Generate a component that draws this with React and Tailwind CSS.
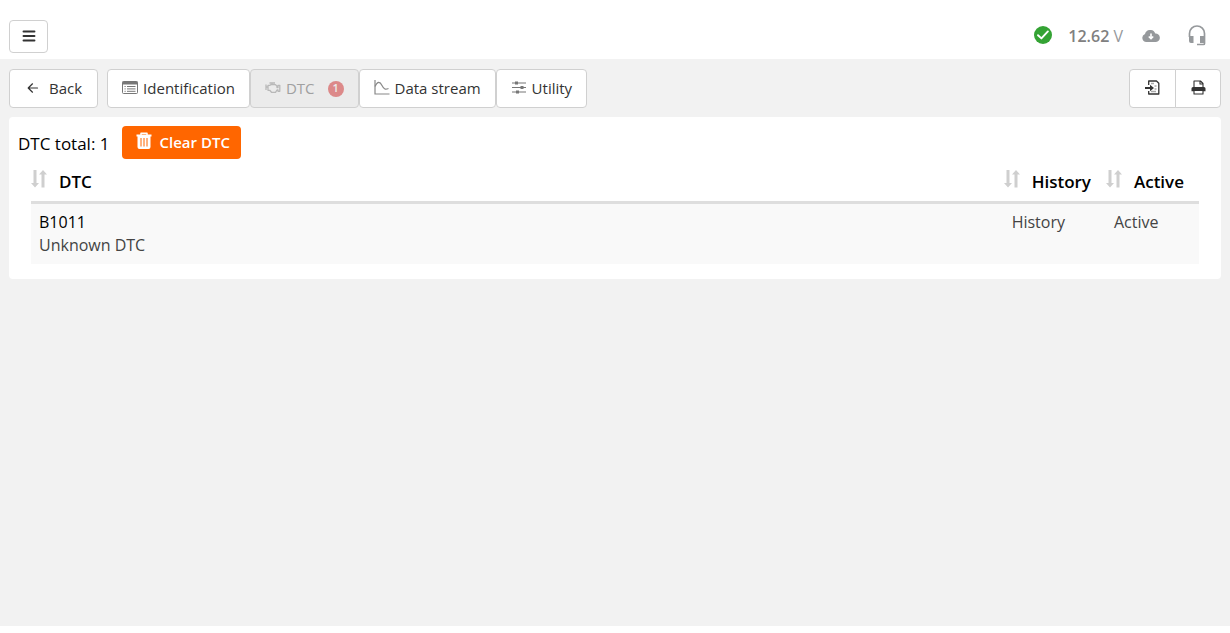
import clsx from 'clsx';

const faults = [{ code: 'B1011', description: 'Unknown DTC', history: 'History', active: 'Active' }];

function MenuIcon() {
  return (
    <svg viewBox="0 0 14 12" className="h-3 w-3.5" stroke="currentColor" strokeLinecap="round" strokeWidth="1.900">
      <path d="M1.500 1.500h11M1.500 6h11M1.500 10.500h11" />
    </svg>
  );
}

function BackIcon() {
  return (
    <svg viewBox="0 0 12 12" className="mb-0.5 h-3 w-3" fill="none" stroke="currentColor" strokeWidth="1.200" strokeLinecap="round" strokeLinejoin="round">
      <path d="M10.500 6H1.500M5.500 1.800L1.200 6l4.300 4.200" />
    </svg>
  );
}

function ListIcon() {
  return (
    <svg viewBox="0 0 16 13" className="mb-0.5 h-[13px] w-4 text-[#777]" fill="none" stroke="currentColor">
      <rect x="0.500" y="0.500" width="15" height="12" rx="1" />
      <path d="M0.500 2h15" strokeWidth="3" />
      <path d="M2.500 5.500h1.200M5 5.500h8.500M2.500 7.900h1.200M5 7.900h8.500M2.500 10.300h1.200M5 10.300h8.500" />
    </svg>
  );
}

function EngineIcon() {
  return (
    <svg viewBox="0 0 16 12" className="mb-0.5 h-3 w-4 text-[#b8b8b8]" fill="none" stroke="currentColor" strokeWidth="1.300" strokeLinejoin="round">
      <path d="M4.500 1h5.500M7 1v1.600M1 2.500v5.500M1 5h2M3 3.300h2l1-.7h4.500l1.500 1.700v1.200h1V3.300h1.800v6H13V8H12l-1.500 2.300h-4L4.700 8.300H3z" />
    </svg>
  );
}

function ChartIcon() {
  return (
    <svg viewBox="0 0 16 15" className="mb-0.5 h-[15px] w-4 text-[#888]" fill="none" stroke="currentColor" strokeWidth="1.200">
      <path d="M1 0v14h14.500" />
      <path d="M1 6.500C3.500 1 6 1.500 8 5.500s3.500 4.200 6.500 3" />
    </svg>
  );
}

function SlidersIcon() {
  return (
    <svg viewBox="0 0 16 13" className="mb-0.5 h-[13px] w-4 text-[#777]" fill="none" stroke="currentColor" strokeWidth="1.200">
      <path d="M1 2h14M1 6.500h14M1 11h14" />
      <path d="M5.500 .5v3M11 5v3M6.500 9.500v3" strokeWidth="3" />
    </svg>
  );
}

function ImportIcon() {
  return (
    <svg viewBox="0 0 15 15" className="mb-0.5 h-[15px] w-[15px] text-[#333]" fill="none" stroke="currentColor" strokeWidth="1.300">
      <path d="M3.700 5V1h7.800L13.800 3.300V14H3.700v-3" strokeLinejoin="round" />
      <path d="M6 3.500h3M9.500 6h2M9.500 9h2M6 11.500h5" stroke="#aaa" />
      <path d="M0 8h6" strokeWidth="2" />
      <path d="M5 4.800L9 8l-4 3.200z" fill="currentColor" stroke="none" />
    </svg>
  );
}

function PrinterIcon() {
  return (
    <svg viewBox="0 0 15 15" className="mb-0.5 h-[15px] w-[15px] text-[#333]" fill="none" stroke="currentColor" strokeWidth="1.100" strokeLinejoin="round">
      <path d="M3 7.500V1h6.500L12 3.500v4M9 1v3h3" />
      <path d="M2 7h11a1.500 1.500 0 0 1 1.500 1.500v2.700H.5V8.500A1.500 1.500 0 0 1 2 7z" fill="currentColor" stroke="none" />
      <path d="M3 10.500h9V14H3z" fill="white" />
    </svg>
  );
}

function CheckIcon() {
  return (
    <svg viewBox="0 0 18 18" className="mb-0.5 h-[18px] w-[18px]" role="img" aria-label="Connected">
      <circle cx="9" cy="9" r="9" fill="#34a334" />
      <path d="M4 9.200l3.400 3.200 6.500-7" fill="none" stroke="white" strokeWidth="1.900" strokeLinecap="round" strokeLinejoin="round" />
    </svg>
  );
}

function CloudIcon() {
  return (
    <svg viewBox="0 0 18 12" className="h-3 w-[18px]">
      <path d="M4.300 12A4.200 4.200 0 0 1 3 3.900 5.400 5.400 0 0 1 13.300 3.600 4.200 4.200 0 0 1 14 12z" fill="#96999c" />
      <path d="M9 3.500v4M6.800 6.500L9 8.700l2.200-2.200" fill="none" stroke="white" strokeWidth="1.600" />
    </svg>
  );
}

function HeadsetIcon() {
  return (
    <svg viewBox="0 0 18 21" className="mb-0.5 h-[21px] w-[18px] text-[#96999c]" fill="none" stroke="currentColor" strokeWidth="1.700">
      <path d="M1.500 12V8.500a7.500 7.500 0 0 1 15 0V18.500q0 1-1 1H9" />
      <path d="M1 11h4.500v7H3q-2 0-2-2zM12 11h5v7h-5z" fill="currentColor" stroke="none" />
    </svg>
  );
}

function TrashIcon() {
  return (
    <svg viewBox="0 0 16 17" className="mb-1 h-[17px] w-4">
      <path d="M5 3V1.200h6V3" fill="none" stroke="white" strokeWidth="1.500" strokeLinejoin="round" />
      <path d="M.5 2.500h15v2h-1V15q0 2-2 2h-9q-2 0-2-2V4.500h-1z" fill="white" />
      <path d="M5 6v8.500M8 6v8.500M11 6v8.500" stroke="#ff6600" strokeWidth="1" />
    </svg>
  );
}

function SortIcon() {
  return (
    <svg viewBox="0 0 16 18" className="h-[18px] w-4 text-[#cfcfcf]" fill="currentColor">
      <path d="M2.500 0h3v13H8l-4 4.500L0 13h2.500z" />
      <path d="M10.500 17.500h3v-13H16L12 0 8 4.500h2.500z" />
    </svg>
  );
}

const tabs = [
  { label: 'Identification', icon: ListIcon },
  { label: 'DTC', icon: EngineIcon, badge: 1 },
  { label: 'Data stream', icon: ChartIcon },
  { label: 'Utility', icon: SlidersIcon },
];

const buttonStyle = 'flex items-center justify-center border border-[#d0d0d0] bg-white text-[#333]';

function TopBar() {
  return (
    <header className="flex h-[59px] items-center justify-between bg-white pt-[13px] pr-6 pl-[9px]">
      <button type="button" aria-label="Menu" className={clsx(buttonStyle, 'h-[33px] w-[39px] rounded')}>
        <MenuIcon />
      </button>
      <div className="flex items-center text-[#96999c]">
        <CheckIcon />
        <p className="ml-4 text-base">
          <span className="font-semibold text-[#808080]">12.62</span> V
        </p>
        <span className="ml-[19px]"><CloudIcon /></span>
        <span className="ml-7"><HeadsetIcon /></span>
      </div>
    </header>
  );
}

function Toolbar() {
  return (
    <nav className="flex h-[39px] items-stretch text-[15px] font-medium">
      <button type="button" className={clsx(buttonStyle, 'mr-[9px] gap-2.5 rounded pr-[15px] pl-[17px]')}>
        <BackIcon />
        Back
      </button>
      {tabs.map(({ label, icon: Icon, badge }) => (
        <button key={label} type="button" disabled={!!badge} className={clsx('flex items-center justify-center gap-[5px] rounded border border-[#d0d0d0] px-3.5', badge ? 'bg-[#ebebeb] text-[#a0a0a0]' : 'bg-white text-[#333]')}>
          <Icon />
          {label}
          {badge && <span className="ml-2 flex h-4 w-4 items-center justify-center rounded-full bg-[#dc8989] text-[11px] font-semibold text-[#ebebeb]">{badge}</span>}
        </button>
      ))}
      <div className="ml-auto flex">
        <button type="button" aria-label="Export" className={clsx(buttonStyle, 'w-[47px] rounded-l')}>
          <ImportIcon />
        </button>
        <button type="button" aria-label="Print" className={clsx(buttonStyle, '-ml-px w-[46px] rounded-r')}>
          <PrinterIcon />
        </button>
      </div>
    </nav>
  );
}

function HeaderCell({ children }) {
  return (
    <th scope="col" className="pr-[15px] pb-2 text-left text-[17px] font-semibold text-black">
      <div className="flex items-start gap-3">
        <SortIcon />
        {children}
      </div>
    </th>
  );
}

function FaultTable() {
  return (
    <table className="w-full border-collapse text-base leading-[23px] text-[#444]">
      <thead>
        <tr className="border-b-[3px] border-[#dedede]">
          <HeaderCell>DTC</HeaderCell>
          <HeaderCell>History</HeaderCell>
          <HeaderCell>Active</HeaderCell>
        </tr>
      </thead>
      <tbody>
        {faults.map((fault) => (
          <tr key={fault.code} className="bg-[#f9f9f9] align-top">
            <td className="w-full px-2 py-[7px]">
              <p className="font-medium text-black">{fault.code}</p>
              <p>{fault.description}</p>
            </td>
            <td className="px-2 py-[7px]">{fault.history}</td>
            <td className="px-2 py-[7px]">{fault.active}</td>
          </tr>
        ))}
      </tbody>
    </table>
  );
}

function App() {
  return (
    <div className="flex min-h-screen flex-col bg-white pb-[7px] font-['Open_Sans',sans-serif]">
      <TopBar />
      <main className="flex-1 bg-[#f2f2f2] px-[9px] pt-2.5">
        <Toolbar />
        <section className="mt-[9px] rounded bg-white px-[9px] pt-[9px] pb-[15px]">
          <div className="flex h-[33px] gap-3">
            <p className="pt-1.5 text-[17px] leading-6 font-medium text-black">DTC total: 1</p>
            <button type="button" className="flex items-center gap-2 rounded bg-[#ff6600] pr-[11px] pl-3.5 text-[15px] font-semibold text-white">
              <TrashIcon />
              Clear DTC
            </button>
          </div>
          <div className="px-[13px] pt-[11px]">
            <FaultTable />
          </div>
        </section>
      </main>
    </div>
  );
}

export default App;
